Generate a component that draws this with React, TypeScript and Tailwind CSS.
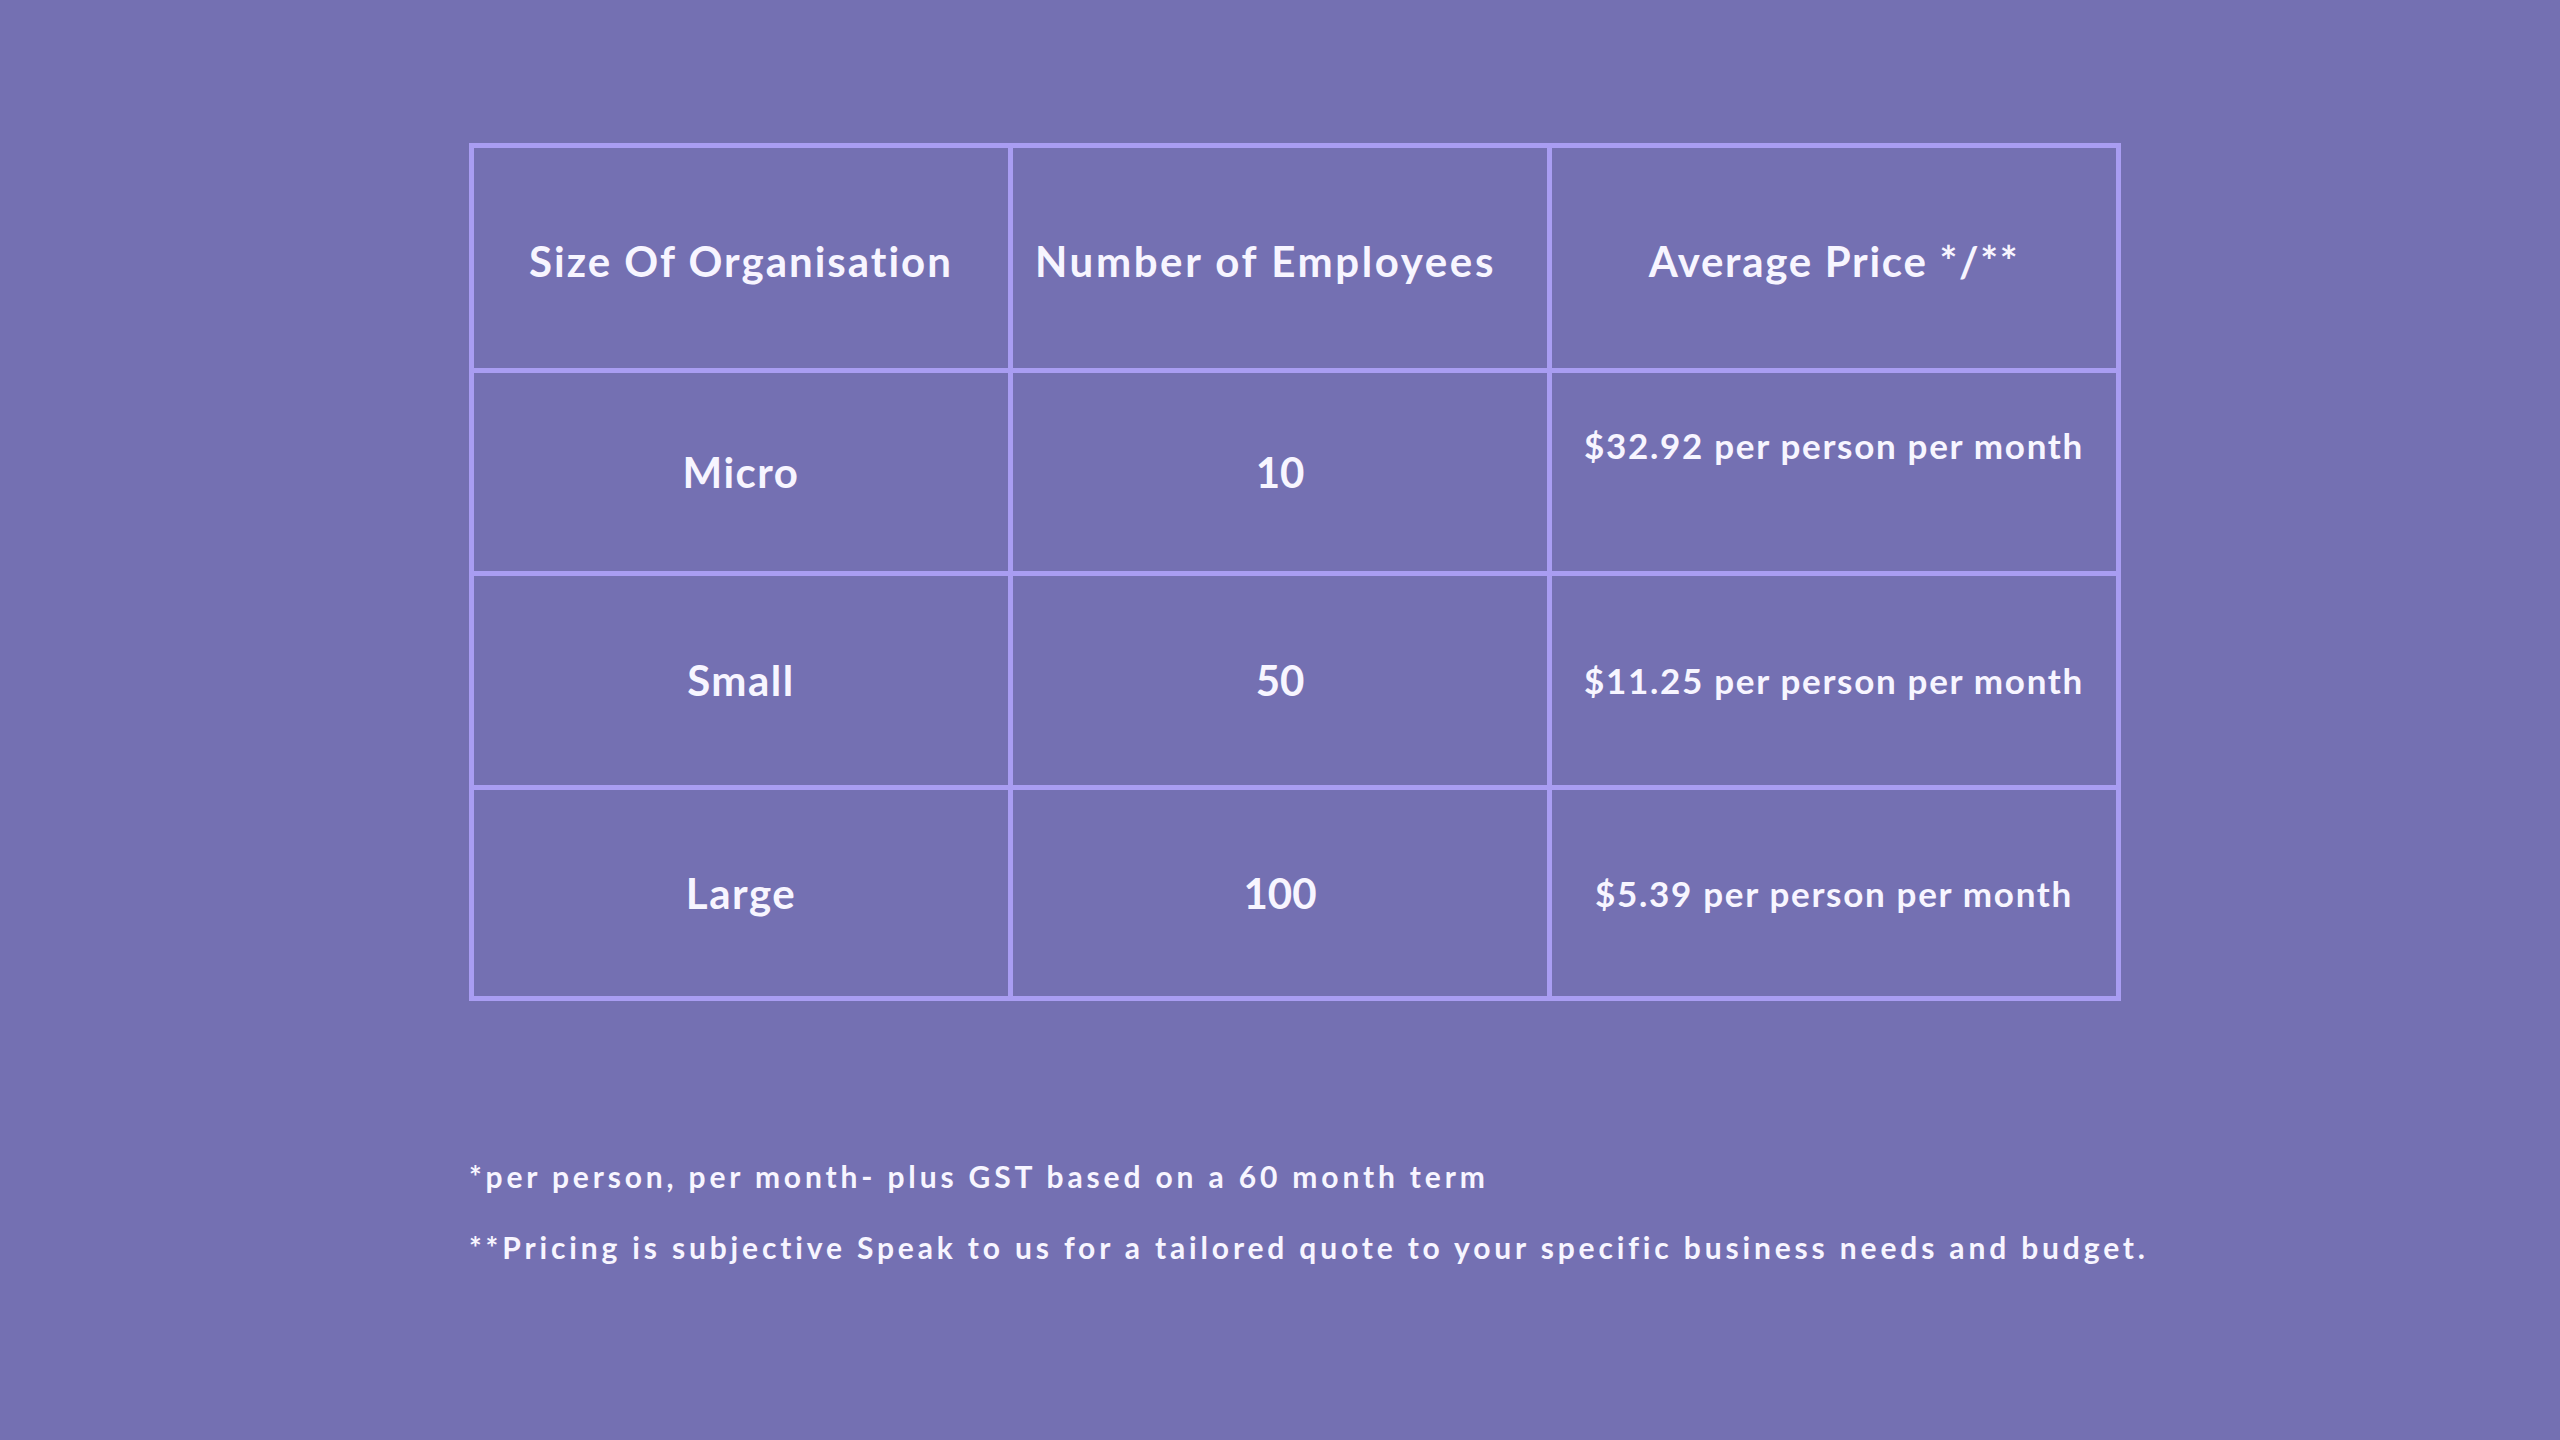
const rows = [
	{ size: 'Micro', employees: '10', price: '$32.92 per person per month', h: 'h-[198px]', raised: true },
	{ size: 'Small', employees: '50', price: '$11.25 per person per month', h: 'h-[209px]', raised: false },
	{ size: 'Large', employees: '100', price: '$5.39 per person per month', h: 'h-[206px]', raised: false }
];

const headers = [
	{ label: 'Size Of Organisation', cls: 'tracking-[2px]' },
	{ label: 'Number of Employees', cls: 'tracking-[2.6px] pr-[29px]' },
	{ label: 'Average Price */**', cls: 'tracking-[1.7px]' }
];

export default function App() {
	return (
		<div className="min-h-screen w-full bg-[#7470b2] text-[#f7f5ff] font-['Lato','Noto_Sans',sans-serif]">
			<div className="pl-[469px] pt-[143px]">
				<div className="grid w-[1652px] grid-cols-[534px_534px_564px] gap-[5px] bg-[#a99df2] p-[5px]">
					{headers.map((h) => (
						<div
							key={h.label}
							className={`flex h-[220px] items-center justify-center bg-[#7470b2] pt-[6px] text-[42px] font-bold ${h.cls}`}
						>
							{h.label}
						</div>
					))}
					{rows.map((r) => (
						<>
							<div key={r.size + 's'} className={`flex ${r.h} items-center justify-center bg-[#7470b2] text-[42px] font-bold tracking-[1.5px]`}>
								{r.size}
							</div>
							<div key={r.size + 'e'} className={`flex ${r.h} items-center justify-center bg-[#7470b2] text-[42px] font-bold`}>
								{r.employees}
							</div>
							<div
								key={r.size + 'p'}
								className={`flex ${r.h} justify-center bg-[#7470b2] text-[35px] font-bold tracking-[1.7px] ${r.raised ? 'items-start pt-[46px]' : 'items-center'}`}
							>
								{r.price}
							</div>
						</>
					))}
				</div>
				<div className="mt-[153px] flex flex-col gap-[26px] text-[30px] font-bold tracking-[3.85px]">
					<p>*per person, per month- plus GST based on a 60 month term</p>
					<p>**Pricing is subjective Speak to us for a tailored quote to your specific business needs and budget.</p>
				</div>
			</div>
		</div>
	);
}
